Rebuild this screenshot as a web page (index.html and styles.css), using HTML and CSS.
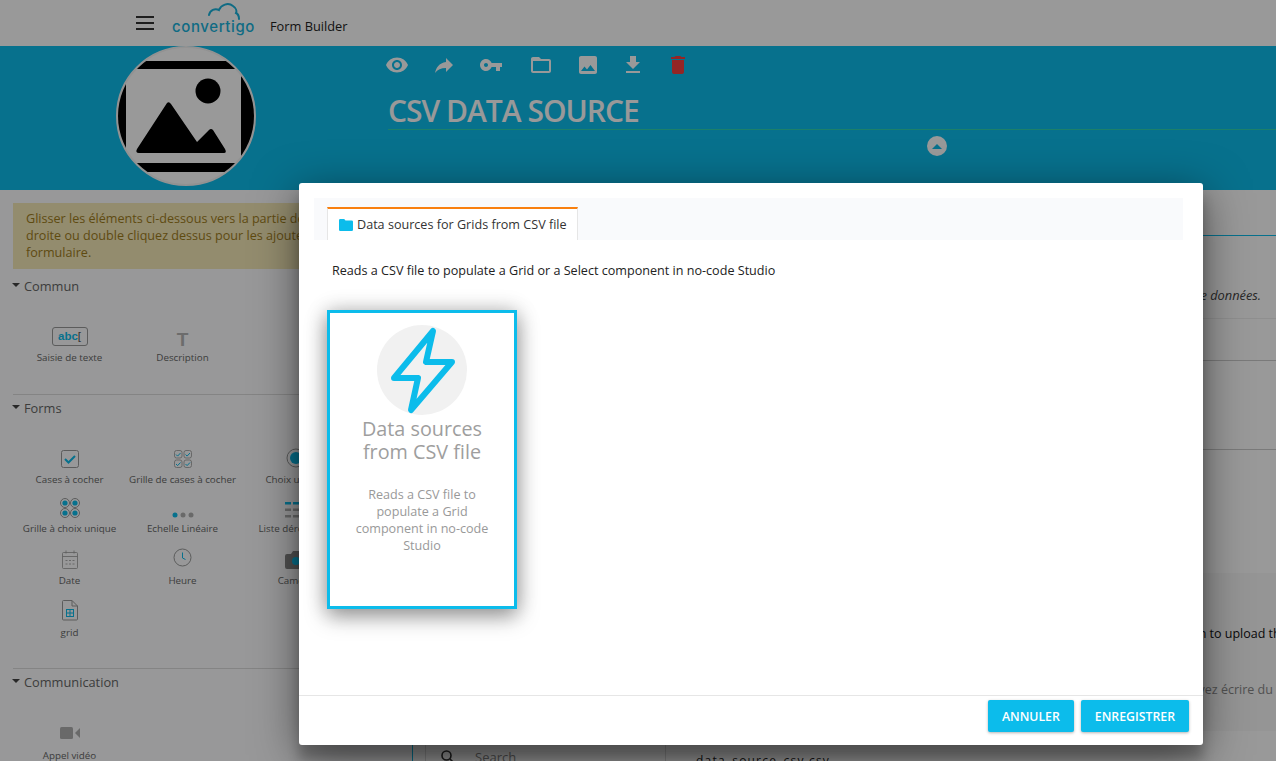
FILE: index.html
```html
<!DOCTYPE html>
<html lang="fr">
<head>
    <meta charset="UTF-8">
    <title>Form Builder</title>
    <link rel="stylesheet" href="styles.css">
</head>
<body>
    <header class="topbar">
        <div class="burger"><span></span><span></span><span></span></div>
        <div class="logo">
            <svg class="logo-cloud" width="34" height="18" viewBox="0 0 34 18"><path d="M1 13c1-5 6-7 10-5 2-5 9-8 14-4 3 2 4 5 3 7 2 1 3 3 3 6"/></svg>
            <span class="logo-text">convertigo</span>
        </div>
        <span class="app-name">Form Builder</span>
    </header>

    <section class="hero">
        <div class="avatar">
            <svg width="136" height="136" viewBox="2 2 136 136">
                <path fill-rule="evenodd" d="M1 15H139V126H1ZM10 23V117H125V23Z"/>
                <circle cx="92" cy="45" r="12.5"/>
                <path d="M51 57 L21 103 Q19 107 23 107 L108 107 Q111 107 109 103 L97 84 Q95 82 93 84 L81 96 L55 58 Q53 55 51 57Z"/>
            </svg>
        </div>
        <div class="hero-main">
            <div class="hero-tools">
                <svg viewBox="0 0 24 24"><path d="M12 4.5C7 4.5 2.73 7.61 1 12c1.73 4.39 6 7.5 11 7.5s9.27-3.11 11-7.5c-1.73-4.39-6-7.5-11-7.5zM12 17c-2.76 0-5-2.24-5-5s2.24-5 5-5 5 2.24 5 5-2.24 5-5 5zm0-8c-1.66 0-3 1.34-3 3s1.34 3 3 3 3-1.34 3-3-1.34-3-3-3z"/></svg>
                <svg viewBox="0 0 24 24"><path d="M14 9V5l7 7-7 7v-4.1c-5 0-8.5 1.6-11 5.1 1-5 4-10 11-11z"/></svg>
                <svg viewBox="0 0 24 24"><path d="M12.65 10C11.83 7.67 9.61 6 7 6c-3.31 0-6 2.69-6 6s2.69 6 6 6c2.61 0 4.83-1.67 5.65-4H17v4h4v-4h2v-4H12.65zM7 14c-1.1 0-2-.9-2-2s.9-2 2-2 2 .9 2 2-.9 2-2 2z"/></svg>
                <svg class="tool-folder" viewBox="0 0 24 24"><path d="M20 6h-8l-2-2H4c-1.1 0-1.99.9-1.99 2L2 18c0 1.1.9 2 2 2h16c1.1 0 2-.9 2-2V8c0-1.1-.9-2-2-2zm0 12H4V8h16v10z"/></svg>
                <svg viewBox="0 0 24 24"><path d="M21 19V5c0-1.1-.9-2-2-2H5c-1.1 0-2 .9-2 2v14c0 1.1.9 2 2 2h14c1.1 0 2-.9 2-2zM8.5 13.5l2.5 3.01L14.5 12l4.5 6H5l3.5-4.5z"/></svg>
                <svg class="tool-tight" viewBox="0 0 24 24"><path d="M19 9h-4V3H9v6H5l7 7 7-7zM5 18v2h14v-2H5z"/></svg>
                <svg class="tool-tight tool-delete" viewBox="0 0 24 24"><path d="M6 19c0 1.1.9 2 2 2h8c1.1 0 2-.9 2-2V7H6v12zM19 4h-3.5l-1-1h-5l-1 1H5v2h14V4z"/></svg>
            </div>
            <h1 class="hero-title">CSV DATA SOURCE</h1>
            <div class="hero-toggle"><span></span></div>
        </div>
    </section>

    <main class="workspace">
        <aside class="sidebar">
            <div class="alert">Glisser les éléments ci-dessous vers la partie de droite ou double cliquez dessus pour les ajouter au formulaire.</div>

            <div class="group group-first">
                <h2 class="group-title">Commun</h2>
                <div class="tools">
                    <div class="tool">
                        <span class="abc">abc<i>[</i></span>
                        <span class="tool-label">Saisie de texte</span>
                    </div>
                    <div class="tool">
                        <span class="big-t">T</span>
                        <span class="tool-label">Description</span>
                    </div>
                </div>
            </div>

            <div class="group">
                <h2 class="group-title">Forms</h2>
                <div class="tools tools-forms">
                    <div class="tool">
                        <svg class="tool-icon" width="18" height="18" viewBox="0 0 18 18"><rect class="line" x=".5" y=".5" width="17" height="17" rx="2"/><path class="tick" d="M4 9l3.5 3.5L14 6"/></svg>
                        <span class="tool-label">Cases à cocher</span>
                    </div>
                    <div class="tool">
                        <svg class="tool-icon" width="18" height="18" viewBox="0 0 18 18"><rect class="line thin" x=".5" y=".5" width="7.5" height="7.5" rx="2"/><path class="tick thin" d="M2 4.5l1.6 1.6L6.5 3"/><rect class="line thin" x="10" y=".5" width="7.5" height="7.5" rx="2"/><path class="tick thin" d="M11.5 4.5l1.6 1.6L16 3"/><rect class="line thin" x=".5" y="10" width="7.5" height="7.5" rx="2"/><path class="tick thin" d="M2 14l1.6 1.6L6.5 12.5"/><rect class="line thin" x="10" y="10" width="7.5" height="7.5" rx="2"/><path class="tick thin" d="M11.5 14l1.6 1.6L16 12.5"/></svg>
                        <span class="tool-label">Grille de cases à cocher</span>
                    </div>
                    <div class="tool">
                        <svg class="tool-icon" width="20" height="20" viewBox="0 0 20 20"><circle class="line" cx="10" cy="10" r="9"/><circle class="dot" cx="10" cy="10" r="6"/></svg>
                        <span class="tool-label">Choix unique</span>
                    </div>

                    <div class="tool">
                        <svg class="tool-icon icon-gap" width="20" height="20" viewBox="0 0 20 20"><circle class="line" cx="5" cy="5" r="4.5"/><circle class="dot" cx="5" cy="5" r="2.6"/><circle class="line" cx="15" cy="5" r="4.5"/><circle class="dot" cx="15" cy="5" r="2.6"/><circle class="line" cx="5" cy="15" r="4.5"/><circle class="dot" cx="5" cy="15" r="2.6"/><circle class="line" cx="15" cy="15" r="4.5"/><circle class="dot" cx="15" cy="15" r="2.6"/></svg>
                        <span class="tool-label">Grille à choix unique</span>
                    </div>
                    <div class="tool">
                        <svg class="tool-icon icon-gap" width="22" height="6" viewBox="0 0 22 6"><circle class="dot" cx="3" cy="3" r="2.5"/><circle class="dark" cx="11" cy="3" r="2.5"/><circle class="dark" cx="19" cy="3" r="2.5"/></svg>
                        <span class="tool-label">Echelle Linéaire</span>
                    </div>
                    <div class="tool">
                        <svg class="tool-icon icon-gap" width="22" height="16" viewBox="0 0 22 16"><rect class="dot" width="6" height="2.5"/><rect class="dot" x="8" width="14" height="2.5"/><rect class="dark" y="6.5" width="6" height="2.5"/><rect class="dark" x="8" y="6.5" width="14" height="2.5"/><rect class="dark" y="13" width="6" height="2.5"/><rect class="dark" x="8" y="13" width="14" height="2.5"/></svg>
                        <span class="tool-label">Liste déroulante</span>
                    </div>

                    <div class="tool">
                        <svg class="tool-icon" width="16" height="19" viewBox="0 0 16 19"><rect class="line thin" x=".5" y="2.5" width="15" height="16" rx="1"/><path class="line thin" d="M.5 6.5h15M4 .5v3M12 .5v3"/><path class="line thin dash" d="M3.5 10.5h9M3.5 14h9"/></svg>
                        <span class="tool-label">Date</span>
                    </div>
                    <div class="tool">
                        <svg class="tool-icon icon-clock" width="19" height="19" viewBox="0 0 19 19"><circle class="line" cx="9.5" cy="9.5" r="8.5"/><path class="tick thin" d="M9.5 4.5v5.5l3 1.5"/></svg>
                        <span class="tool-label">Heure</span>
                    </div>
                    <div class="tool">
                        <svg class="tool-icon" width="22" height="18" viewBox="0 0 22 18"><path class="darker" d="M2 3h4l2-3h6l2 3h4a2 2 0 0 1 2 2v11a2 2 0 0 1-2 2H2a2 2 0 0 1-2-2V5a2 2 0 0 1 2-2z"/><circle class="dot" cx="11" cy="10" r="4"/></svg>
                        <span class="tool-label">Caméra</span>
                    </div>

                    <div class="tool">
                        <svg class="tool-icon" width="16" height="21" viewBox="0 0 16 21"><path class="line" d="M1.5.5H10L15.5 6v13a1 1 0 0 1-1 1h-13a1 1 0 0 1-1-1V1.500a1 1 0 0 1 1-1zM10 .5V6h5.500"/><path class="dot" d="M4 9h8v8H4zM5 10v2.500h2.500V10zM8.500 10v2.500H11V10zM5 13.500V16h2.500v-2.500zM8.500 13.500V16H11v-2.500z" fill-rule="evenodd"/></svg>
                        <span class="tool-label">grid</span>
                    </div>
                </div>
            </div>

            <div class="group">
                <h2 class="group-title">Communication</h2>
                <div class="tools tools-last">
                    <div class="tool">
                        <svg class="tool-icon icon-video" width="20" height="12" viewBox="0 0 20 12"><rect class="dark" width="13" height="12" rx="1.500"/><path class="dark" d="M15 6l5-5v10z"/></svg>
                        <span class="tool-label">Appel vidéo</span>
                    </div>
                </div>
            </div>
        </aside>

        <div class="editor">
            <div class="editor-tabs"></div>
            <div class="row row-intro"><em>Vous pouvez ajouter ici une source de données.</em></div>
            <div class="row row-a"></div>
            <div class="row row-b"></div>
            <div class="row row-upload">Click on this button to upload the CSV file</div>
            <div class="row row-hint">Ici, vous pouvez écrire du texte d'aide</div>
            <div class="row-bottom">
                <div class="search">
                    <svg width="14" height="14" viewBox="0 0 14 14"><circle cx="5.5" cy="5.5" r="4.5"/><path d="M9 9l4 4"/></svg>
                    <span>Search</span>
                </div>
                <span class="file-name">data_source_csv.csv</span>
            </div>
        </div>
    </main>

    <div class="backdrop"></div>

    <div class="modal">
        <div class="modal-body">
            <div class="tabs">
                <div class="tab">
                    <svg width="14" height="12" viewBox="0 0 14 12"><path d="M1.200 0h4l1.300 1.500h6.300A1.200 1.200 0 0 1 14 2.700v8.100a1.200 1.200 0 0 1-1.200 1.200H1.200A1.200 1.200 0 0 1 0 10.800V1.200A1.200 1.200 0 0 1 1.200 0z"/></svg>
                    Data sources for Grids from CSV file
                </div>
            </div>
            <p class="modal-desc">Reads a CSV file to populate a Grid or a Select component in no-code Studio</p>
            <div class="card">
                <div class="card-icon">
                    <svg width="90" height="90" viewBox="0 0 90 90"><path d="M56 6 49 37H75L34 85 41 53H17Z"/></svg>
                </div>
                <h3 class="card-title">Data sources from CSV file</h3>
                <p class="card-text">Reads a CSV file to populate a Grid component in no-code Studio</p>
            </div>
        </div>
        <div class="modal-footer">
            <button class="btn">ANNULER</button>
            <button class="btn">ENREGISTRER</button>
        </div>
    </div>
</body>
</html>
```

FILE: styles.css
```css
* {
    box-sizing: border-box;
}

html, body {
    height: 100%;
}

body {
    margin: 0;
    height: 761px;
    overflow: hidden;
    position: relative;
    font-family: "Open Sans", Arial, sans-serif;
    font-size: 13px;
    color: #333;
    background-color: #fff;
}

/* top bar */
.topbar {
    height: 46px;
    display: flex;
    align-items: center;
    padding-left: 136px;
    background-color: #fff;
}

.burger {
    width: 18px;
    display: flex;
    flex-direction: column;
    gap: 4px;
}

.burger span {
    height: 2px;
    background-color: #333;
}

.logo {
    position: relative;
    margin-left: 18px;
    margin-top: 6px;
    width: 98px;
}

.logo-cloud {
    position: absolute;
    left: 36px;
    top: -15px;
}

.logo-cloud path {
    fill: none;
    stroke: #1ab3dc;
    stroke-width: 2;
    stroke-linecap: round;
}

.logo-text {
    font-family: Inter, sans-serif;
    font-size: 15px;
    font-weight: 500;
    letter-spacing: 0.6px;
    color: #1ab3dc;
}

.app-name {
    font-size: 12.8px;
    color: #222;
    margin-top: 6px;
}

/* blue header */
.hero {
    height: 144px;
    display: flex;
    background-color: #0cbceb;
}

.avatar {
    width: 140px;
    height: 140px;
    margin-left: 116px;
    border: 2px solid #f4f4f4;
    border-radius: 50%;
    overflow: hidden;
    background-color: #fff;
}

.avatar svg {
    display: block;
}

.hero-main {
    flex: 1;
    margin-left: 132px;
}

.hero-tools {
    height: 38px;
    display: flex;
    align-items: center;
    gap: 23px;
    margin-left: -3px;
}

.hero-tools svg {
    width: 24px;
    height: 24px;
    fill: #fff;
}

.hero-tools .tool-folder {
    margin-left: 3px;
}

.hero-tools .tool-tight {
    margin-left: -2px;
}

.hero-tools .tool-delete {
    fill: #f73e3e;
}

.hero-title {
    margin: 9px 0 0;
    height: 37px;
    font-size: 30px;
    line-height: 36px;
    font-weight: 600;
    letter-spacing: -1px;
    color: #fff;
    border-bottom: 1px solid #2fd6b0;
}

.hero-toggle {
    width: 20px;
    height: 20px;
    margin: 6px 0 0 539px;
    border-radius: 50%;
    background-color: #fff;
    display: flex;
    align-items: center;
    justify-content: center;
}

.hero-toggle span {
    width: 0;
    height: 0;
    border-left: 5px solid transparent;
    border-right: 5px solid transparent;
    border-bottom: 5px solid #0cbceb;
}

/* page under the dialog */
.workspace {
    height: 571px;
    display: flex;
    overflow: hidden;
}

.sidebar {
    width: 413px;
    flex-shrink: 0;
    padding: 13px 0 0 13px;
    border-right: 1px solid #0cbceb;
    background-color: #fdfeff;
}

.alert {
    width: 331px;
    height: 66px;
    padding: 7px 13px;
    font-size: 12.6px;
    line-height: 17px;
    color: #9f7d1c;
    background-color: #f5e9b8;
}

.group {
    padding-top: 3px;
    padding-bottom: 28px;
    border-top: 1px solid #ddd;
}

.group-first {
    margin-top: 7px;
    padding-top: 0;
    padding-bottom: 29px;
    border-top: 0;
}

.group-title {
    margin: 0;
    height: 20px;
    display: flex;
    align-items: center;
    gap: 4px;
    font-size: 12.8px;
    font-weight: 400;
    color: #666;
}

.group-title::before {
    content: '';
    border-left: 4px solid transparent;
    border-right: 4px solid transparent;
    border-top: 4px solid #444;
    margin-bottom: 3px;
    margin-left: -1px;
}

.tools {
    margin-top: 17px;
    display: grid;
    grid-template-columns: repeat(3, 113px);
    grid-auto-rows: 52px;
}

.tools-forms {
    grid-template-rows: 52px 49px 52px 52px;
}

.tools-last {
    margin-top: 19px;
}

.tool {
    display: flex;
    flex-direction: column;
    align-items: center;
    justify-content: flex-end;
}

.tool-label {
    height: 16px;
    line-height: 17px;
    font-size: 9.8px;
    color: #666;
    white-space: nowrap;
}

.tool-icon {
    display: block;
    margin-bottom: 3px;
}

.icon-gap {
    margin-bottom: 2px;
}

.icon-clock {
    margin-bottom: 5px;
}

.icon-video {
    margin-bottom: 8px;
}

.line {
    fill: none;
    stroke: #999;
    stroke-width: 1;
}

.line.thin {
    stroke-width: 0.8;
}

.line.dash {
    stroke-dasharray: 2 1.5;
}

.tick {
    fill: none;
    stroke: #0cbceb;
    stroke-width: 2;
}

.tick.thin {
    stroke-width: 1;
}

.dot {
    fill: #0cbceb;
}

.dark {
    fill: #b0b0b0;
}

.darker {
    fill: #888;
}

.abc {
    width: 36px;
    height: 19px;
    margin-bottom: 3px;
    border: 1px solid #999;
    border-radius: 3px;
    text-align: center;
    font-family: "Liberation Sans", Arial, sans-serif;
    font-size: 11.5px;
    line-height: 17px;
    font-weight: 700;
    color: #0cbceb;
}

.abc i {
    font-style: normal;
    font-weight: 400;
    color: #555;
}

.big-t {
    font-family: "Liberation Sans", Arial, sans-serif;
    font-size: 19px;
    line-height: 19px;
    font-weight: 700;
    color: #b5b5b5;
}

.editor {
    flex: 1;
    min-width: 0;
    background-color: #fff;
}

.editor-tabs {
    height: 46px;
    border-bottom: 1px solid #0cbceb;
}

.row {
    padding-right: 15px;
    border-bottom: 1px solid #e8e8e8;
    white-space: nowrap;
}

.row-intro {
    height: 83px;
    padding-top: 50px;
    text-align: right;
    font-size: 12.8px;
    color: #444;
    border-bottom-color: #eee;
}

.row-a {
    height: 42px;
    border-bottom-color: #ccc;
}

.row-b {
    height: 89px;
    border-bottom-color: #ccc;
}

.row-upload {
    height: 185px;
    padding-top: 175px;
    padding-left: 681px;
    font-size: 12.5px;
    color: #111;
    border: 0;
    background: linear-gradient(#fff 123px, #f8f8f8 123px);
}

.row-hint {
    height: 96px;
    padding-top: 46px;
    padding-left: 713px;
    font-size: 12.5px;
    color: #888;
    border: 0;
    background-color: #f8f8f8;
}

.row-bottom {
    height: 30px;
    display: flex;
    padding: 14px 0 0 12px;
    background-color: #fff;
}

.search {
    width: 241px;
    height: 40px;
    display: flex;
    padding: 3px 0 0 15px;
    gap: 20px;
    border-left: 1px solid #ddd;
    border-right: 1px solid #ddd;
    font-size: 13px;
    color: #888;
}

.search svg {
    fill: none;
    stroke: #333;
    stroke-width: 1.6;
    margin-top: 2px;
}

.file-name {
    margin-left: 30px;
    padding-top: 7px;
    font-size: 12px;
    letter-spacing: 1.2px;
    color: #222;
}

/* dialog */
.backdrop {
    position: absolute;
    inset: 0;
    background-color: rgba(0, 0, 0, 0.4);
}

.modal {
    position: absolute;
    left: 299px;
    top: 183px;
    width: 904px;
    height: 562px;
    display: flex;
    flex-direction: column;
    border-radius: 3px;
    background-color: #fff;
    box-shadow: 0 10px 45px rgba(0, 0, 0, 0.5), 0 15px 12px rgba(0, 0, 0, 0.22);
}

.modal-body {
    flex: 1;
    padding: 15px 20px 0 15px;
}

.tabs {
    height: 42px;
    display: flex;
    align-items: flex-end;
    padding-left: 13px;
    background-color: #f9fafc;
}

.tab {
    width: 251px;
    height: 33px;
    display: flex;
    align-items: center;
    gap: 4px;
    padding-left: 11px;
    font-size: 12.6px;
    color: #333;
    background-color: #fff;
    border: 1px solid #e6e6e6;
    border-top: 2px solid #f9800f;
    border-bottom: 0;
}

.tab svg {
    fill: #0cbceb;
}

.modal-desc {
    margin: 22px 0 0 18px;
    font-size: 12.6px;
    line-height: 17px;
    color: #222;
}

.card {
    width: 190px;
    height: 299px;
    margin: 31px 0 0 13px;
    padding: 12px 20px 0;
    border: 3px solid #0cbceb;
    background-color: #fff;
    text-align: center;
    box-shadow: 0 8px 20px rgba(0, 0, 0, 0.35), 0 0 20px rgba(0, 0, 0, 0.2);
}

.card-icon {
    width: 90px;
    height: 90px;
    margin: 0 auto;
    border-radius: 50%;
    background-color: #f1f1f1;
}

.card-icon svg {
    display: block;
    fill: none;
    stroke: #0cbceb;
    stroke-width: 6;
    stroke-linejoin: round;
}

.card-title {
    margin: 2px -10px 0;
    font-size: 19.8px;
    line-height: 23px;
    font-weight: 400;
    color: #9e9e9e;
}

.card-text {
    margin: 23px -5px 0;
    font-size: 12.6px;
    line-height: 17px;
    color: #999;
}

.modal-footer {
    height: 50px;
    display: flex;
    justify-content: flex-end;
    gap: 7px;
    padding: 4px 14px 0 0;
    border-top: 1px solid #e6e6e6;
}

.btn {
    height: 32px;
    padding: 0 14px;
    border: 0;
    border-radius: 2px;
    font-family: "Open Sans", Arial, sans-serif;
    font-size: 12.3px;
    font-weight: 600;
    color: #fff;
    background-color: #0cbceb;
    box-shadow: 0 1px 3px rgba(0, 0, 0, 0.3);
}
```
